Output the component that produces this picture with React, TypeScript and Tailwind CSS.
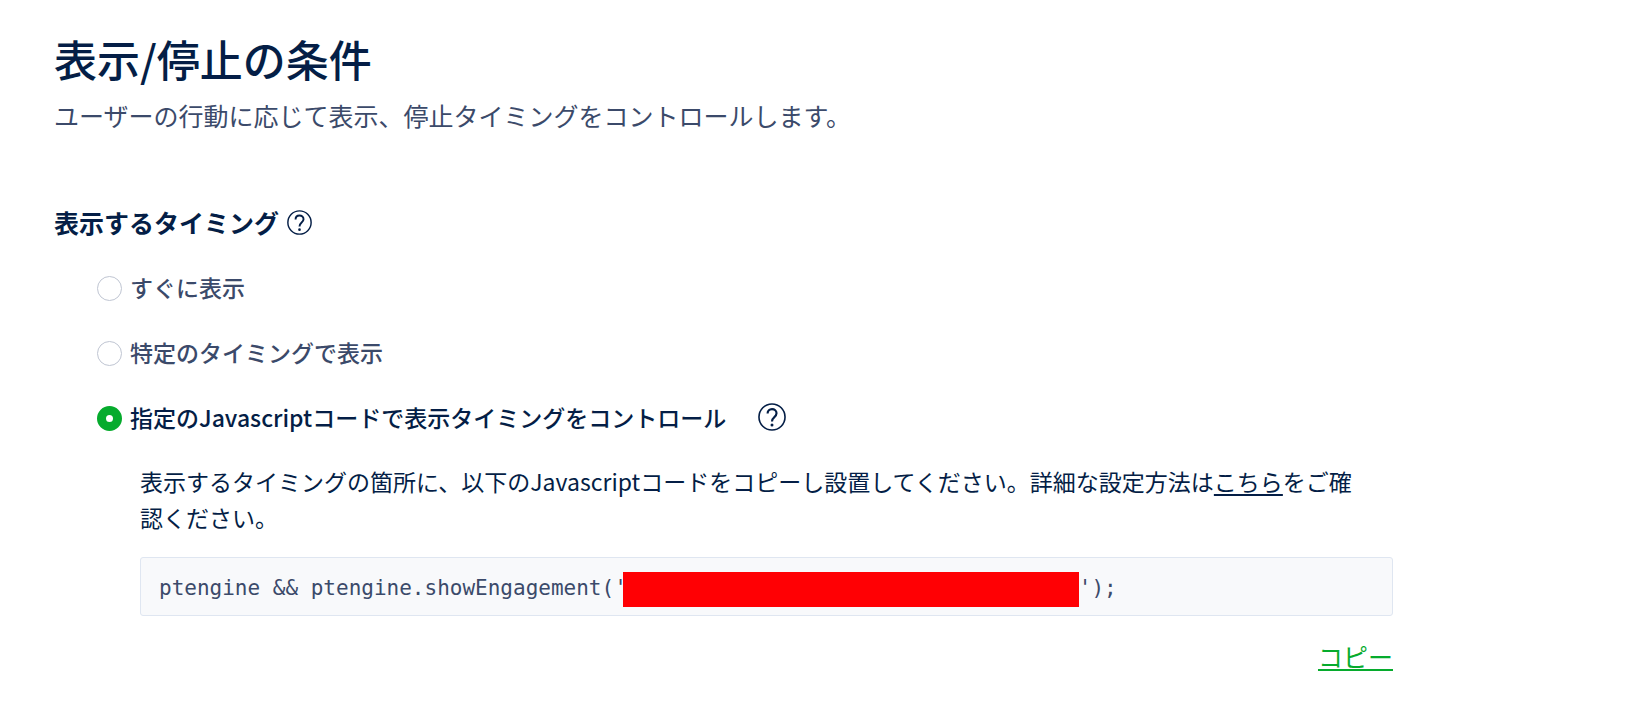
import { useState } from "react";

const CODE_PREFIX = "ptengine && ptengine.showEngagement('";
const CODE_SUFFIX = "');";

const options = [
  { id: "now", label: "すぐに表示" },
  { id: "timing", label: "特定のタイミングで表示" },
  { id: "script", label: "指定のJavascriptコードで表示タイミングをコントロール" },
];

function HelpIcon({ className }: { className: string }) {
  return (
    <svg viewBox="0 0 26 26" fill="none" stroke="currentColor" className={className} aria-hidden="true">
      <circle cx="13" cy="13" r="12.1" strokeWidth="1.5" />
      <path
        d="M8.900 9.800C8.900 7.300 10.700 5.700 13 5.700s4.200 1.600 4.200 3.900c0 1.700-.9 2.600-2.200 3.700-1.300 1.100-2 1.900-2 3.900"
        strokeWidth="2"
      />
      <circle cx="13" cy="20.500" r="1.400" fill="currentColor" stroke="none" />
    </svg>
  );
}

export default function App() {
  const [selected, setSelected] = useState("script");

  return (
    <main className="min-h-screen bg-white pt-[30px] pr-12 pb-8 pl-[54px] font-['Noto_Sans_CJK_JP',sans-serif] text-[#041e46]">
      <div className="max-w-[1339px]">
        <h1 className="text-[43px] leading-[56px] font-medium">表示/停止の条件</h1>
        <p className="mt-[11px] text-[25px] leading-9 text-[#3b4a6a]">
          ユーザーの行動に応じて表示、停止タイミングをコントロールします。
        </p>

        <section className="mt-[71px]">
          <div className="flex items-center gap-2">
            <h2 className="text-[25px] leading-9 font-bold">表示するタイミング</h2>
            <button type="button" aria-label="ヘルプ">
              <HelpIcon className="size-[25px]" />
            </button>
          </div>

          <div className="mt-[29px] flex flex-col gap-[29px] pl-[43px]">
            {options.map(({ id, label }) => (
              <div key={id} className="flex items-center">
                <input
                  id={id}
                  type="radio"
                  name="display-timing"
                  checked={selected === id}
                  onChange={() => setSelected(id)}
                  className="mt-0.5 size-[25px] shrink-0 appearance-none rounded-full border border-[#bfc5d2] bg-white checked:border-[9px] checked:border-[#06ab2d]"
                />
                <label
                  htmlFor={id}
                  className={
                    selected === id
                      ? "pl-2 text-[23px] leading-9 font-medium"
                      : "pl-2 text-[23px] leading-9 font-medium text-[#3b4a6a]"
                  }
                >
                  {label}
                </label>
                {id === "script" && (
                  <button type="button" aria-label="ヘルプ" className="ml-8">
                    <HelpIcon className="size-7" />
                  </button>
                )}
              </div>
            ))}
          </div>

          <div className="mt-7 ml-[86px]">
            <p className="pr-8 text-[23px] leading-9">
              表示するタイミングの箇所に、以下のJavascriptコードをコピーし設置してください。詳細な設定方法は
              <a href="#guide" className="underline decoration-2 underline-offset-3">
                こちら
              </a>
              をご確認ください。
            </p>
            <div className="mt-[22px] flex items-start rounded-[3px] border border-[#dfe6f1] bg-[#f8f9fb] px-[18px] pt-3.5 pb-2 font-['DejaVu_Sans_Mono',monospace] text-[21px] leading-8 text-[#3b4a6a]">
              <code className="font-[inherit] whitespace-pre">{CODE_PREFIX}</code>
              <span className="-ml-1 h-[35px] w-[456px] bg-[#ff0004]" />
              <code className="font-[inherit] whitespace-pre">{CODE_SUFFIX}</code>
            </div>
            <div className="mt-[22px] flex justify-end">
              <button
                type="button"
                className="text-[25px] leading-9 text-[#06ab2d] underline decoration-2 underline-offset-2"
              >
                コピー
              </button>
            </div>
          </div>
        </section>
      </div>
    </main>
  );
}
